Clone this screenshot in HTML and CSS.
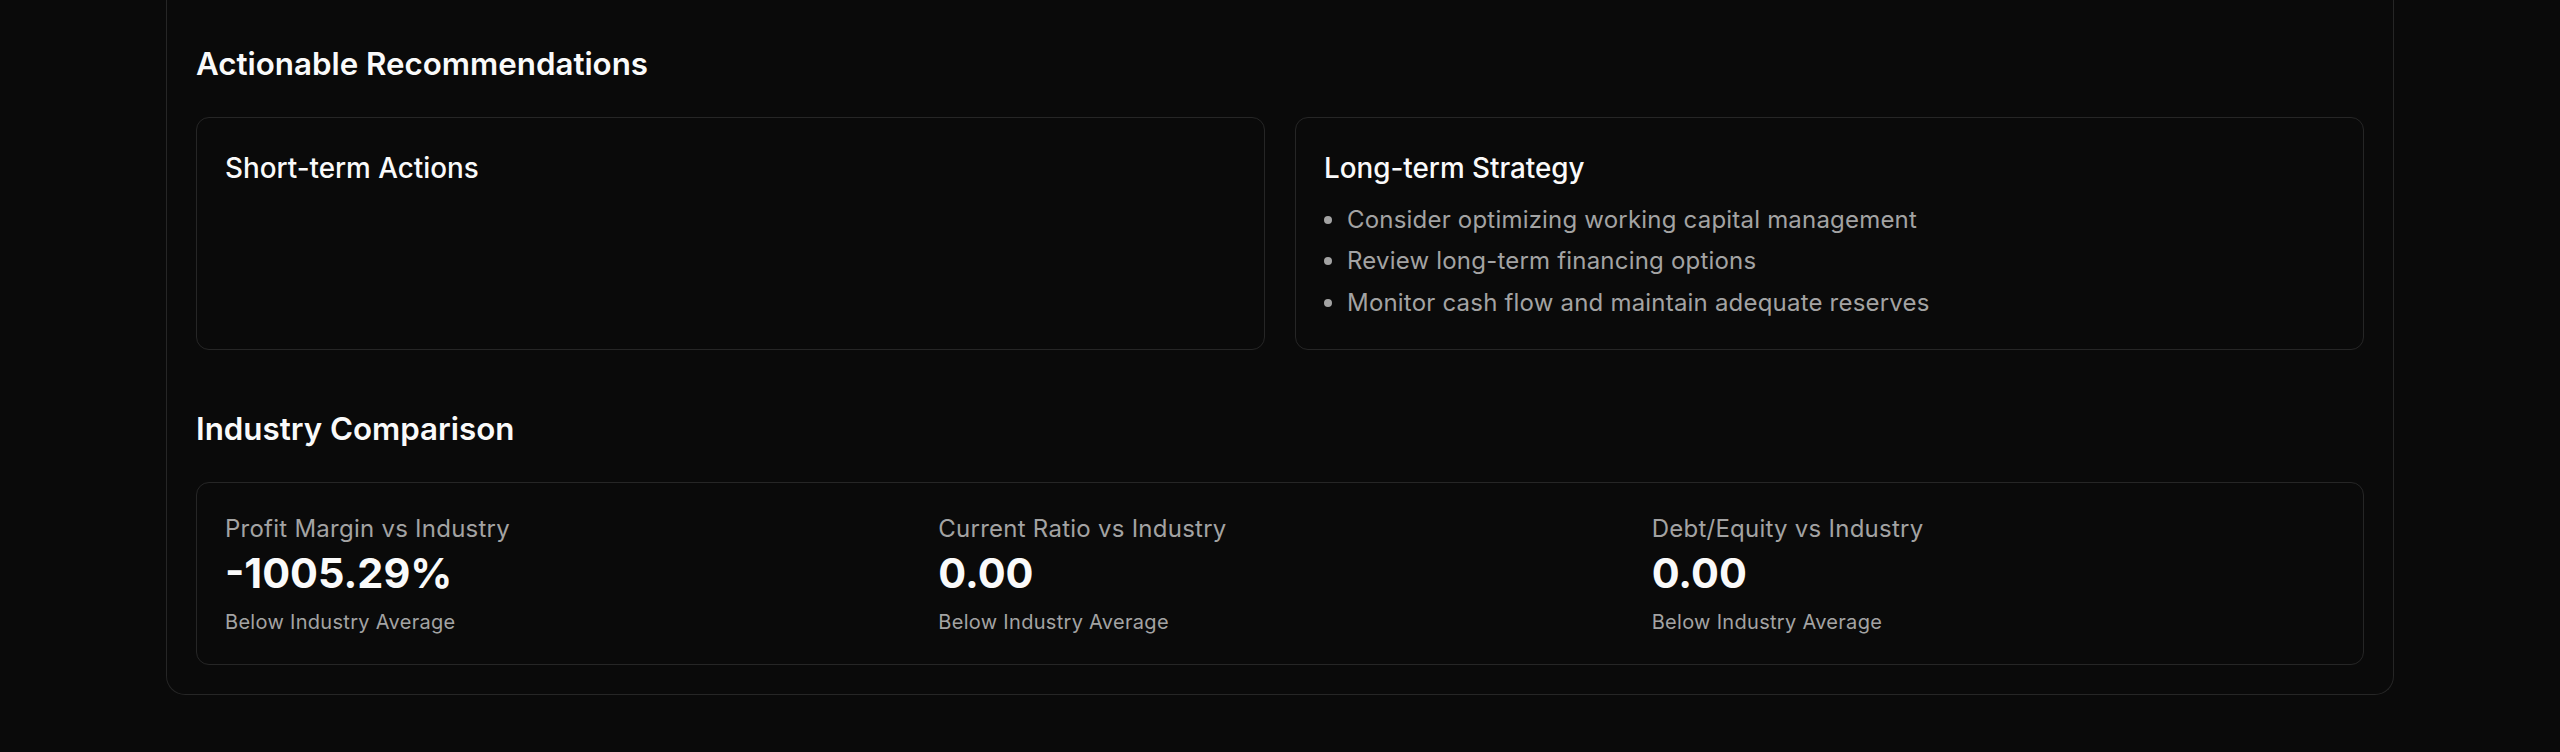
FILE: index.html
```html
<!DOCTYPE html>
<html lang="en">
<head>
    <meta charset="UTF-8">
    <meta name="viewport" content="width=device-width, initial-scale=1.0">
    <title>Financial Analysis</title>
    <link rel="stylesheet" href="styles.css">
</head>
<body>
    <main class="report">
        <section class="section">
            <h2 class="section-title">Actionable Recommendations</h2>
            <div class="rec-grid">
                <div class="card">
                    <h3 class="card-title">Short-term Actions</h3>
                    <ul class="rec-list"></ul>
                </div>
                <div class="card">
                    <h3 class="card-title">Long-term Strategy</h3>
                    <ul class="rec-list">
                        <li>Consider optimizing working capital management</li>
                        <li>Review long-term financing options</li>
                        <li>Monitor cash flow and maintain adequate reserves</li>
                    </ul>
                </div>
            </div>
        </section>

        <section class="section">
            <h2 class="section-title">Industry Comparison</h2>
            <div class="card compare">
                <div class="metric">
                    <p class="metric-label">Profit Margin vs Industry</p>
                    <p class="metric-value">-1005.29%</p>
                    <p class="metric-note">Below Industry Average</p>
                </div>
                <div class="metric">
                    <p class="metric-label">Current Ratio vs Industry</p>
                    <p class="metric-value">0.00</p>
                    <p class="metric-note">Below Industry Average</p>
                </div>
                <div class="metric">
                    <p class="metric-label">Debt/Equity vs Industry</p>
                    <p class="metric-value">0.00</p>
                    <p class="metric-note">Below Industry Average</p>
                </div>
            </div>
        </section>
    </main>
</body>
</html>
```

FILE: styles.css
```css
html, body {
    margin: 0;
    padding: 0;
    background: #0a0a0a;
    color: #fafafa;
    font-family: Inter, "Noto Sans", sans-serif;
}

body {
    padding: 0 166px 56px;
}

/* card wrapper, its top is scrolled out of view */
.report {
    border: 1px solid #262626;
    border-top: none;
    border-radius: 0 0 19px 19px;
    padding: 42px 29px 29px;
}

.section + .section {
    margin-top: 57.5px;
}

.section-title {
    margin: 0 0 31px;
    font-size: 31.3px;
    line-height: 44px;
    font-weight: 600;
}

.rec-grid {
    display: grid;
    grid-template-columns: repeat(2, 1fr);
    gap: 30px;
}

.card {
    border: 1px solid #262626;
    border-radius: 13px;
    padding: 30px 28px;
}

.card-title {
    margin: 0 0 15.5px;
    font-size: 27.8px;
    line-height: 40px;
    font-weight: 500;
}

.rec-list {
    margin: 0;
    padding: 0;
    list-style: none;
    color: #a3a3a3;
    font-size: 24px;
    letter-spacing: 0.2px;
    line-height: 32px;
}

.rec-list li {
    display: flex;
    align-items: center;
}

.rec-list li::before {
    content: '';
    width: 8px;
    height: 8px;
    margin-right: 15px;
    border-radius: 50%;
    background: #a3a3a3;
    flex-shrink: 0;
}

.rec-list li + li {
    margin-top: 9.7px;
}

.compare {
    display: grid;
    grid-template-columns: repeat(3, 1fr);
    gap: 30px;
    padding: 30px 28px 29px;
}

.metric p {
    margin: 0;
}

.metric-label {
    color: #a3a3a3;
    font-size: 24px;
    letter-spacing: 0.25px;
    line-height: 32px;
}

.metric-value {
    margin-top: 4px !important;
    font-size: 41.4px;
    line-height: 48px;
    font-weight: 700;
}

.metric-note {
    margin-top: 12px !important;
    color: #a3a3a3;
    font-size: 20px;
    letter-spacing: 0.3px;
    line-height: 26px;
}
```
